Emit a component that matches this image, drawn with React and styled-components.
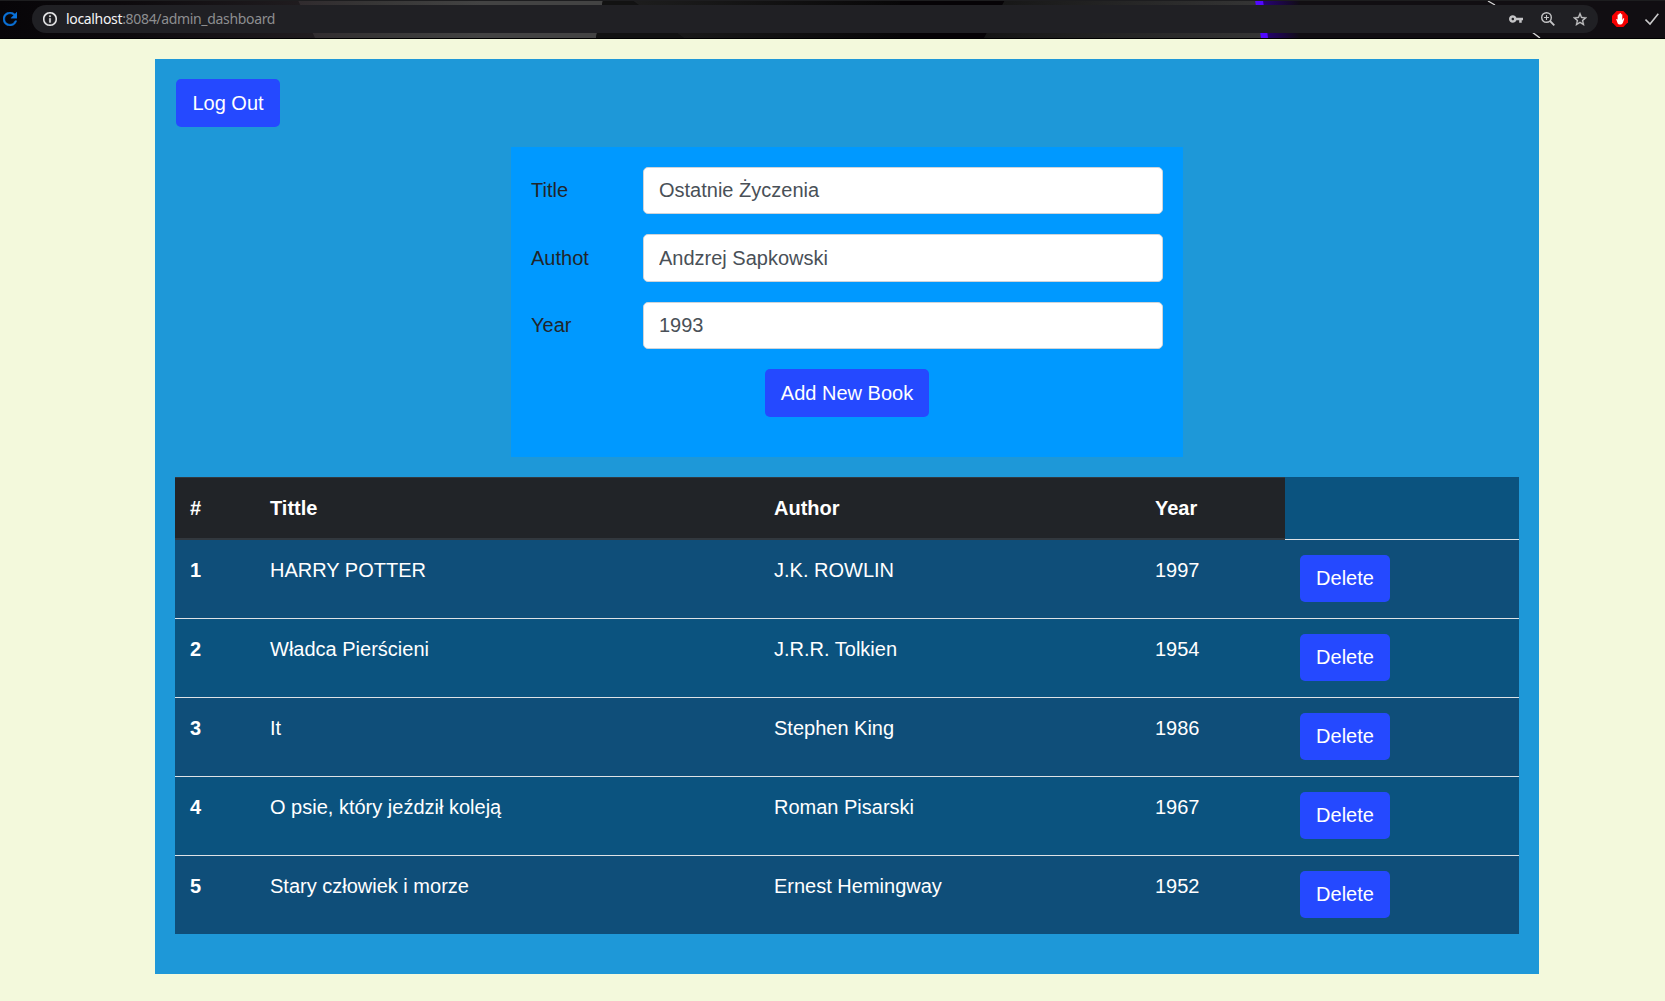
import React from "react";
import styled, { createGlobalStyle } from "styled-components";

const GlobalStyle = createGlobalStyle`
  *, *::before, *::after { box-sizing: border-box; }
  body {
    margin: 0;
    min-height: 1001px;
    background: #f3f9dc;
    color: #212529;
    font-family: "Liberation Sans", Arial, sans-serif;
    font-size: 20px;
    line-height: 30px;
    overflow: hidden;
  }
`;

const BrowserBar = styled.header`
  position: relative;
  display: flex;
  align-items: center;
  height: 39px;
  padding: 0 5px 1px 3px;
  background: #0a080b;
  border-bottom: 1px solid #000;
`;

const ThemeArt = styled.svg`
  position: absolute;
  inset: 0;
  width: 100%;
  height: 38px;
`;

const Icon = styled.svg`
  position: relative;
  flex: none;
  display: block;
  width: ${(p) => p.$size || 14}px;
  height: ${(p) => p.$size || 14}px;
  fill: ${(p) => p.$color || "#c4c4c6"};
`;

const AddressField = styled.div`
  position: relative;
  flex: 1;
  display: flex;
  align-items: center;
  height: 28px;
  margin: 0 14px 0 15px;
  padding: 0 11px;
  border-radius: 14px;
  background: #202024;
`;

const Url = styled.span`
  flex: 1;
  margin-left: 9px;
  font-family: "Noto Sans", "Open Sans", sans-serif;
  font-size: 14px;
  line-height: 20px;
  letter-spacing: -0.33px;
  color: #8d8e90;
`;

const Host = styled.span`
  color: #f4f4f5;
`;

const AddressActions = styled.div`
  display: flex;
  align-items: center;
  gap: 18px;
`;

const Extensions = styled.div`
  position: relative;
  display: flex;
  align-items: center;
  gap: 17px;
  margin-right: 1px;
`;

const Dashboard = styled.main`
  display: flex;
  flex-direction: column;
  width: 1384px;
  height: 915px;
  margin: 20px 0 0 155px;
  padding: 20px;
  background: #1e98d8;
`;

const Button = styled.button`
  display: block;
  height: ${(p) => (p.$compact ? 47 : 48)}px;
  width: ${(p) => p.$width}px;
  padding: ${(p) => (p.$compact ? "0 0 1px" : "0")};
  border: 0;
  border-radius: 5px;
  background: #2549ff;
  color: #fff;
  font: inherit;
  line-height: 30px;
  text-align: center;
`;

const TopActions = styled.div`
  padding-left: 1px;
`;

const BookForm = styled.form`
  display: flex;
  flex-direction: column;
  align-items: center;
  gap: 20px;
  width: 672px;
  height: 310px;
  margin: 20px auto;
  padding: 20px 20px 40px;
  background: #0099ff;
`;

const Field = styled.label`
  display: grid;
  grid-template-columns: 112px 520px;
  align-items: start;
  width: 100%;
`;

const FieldName = styled.span`
  padding-top: ${(p) => Math.floor((p.$height - 30) / 2)}px;
`;

const Input = styled.input`
  width: 100%;
  height: ${(p) => p.$height}px;
  padding: 0 15px;
  border: 1px solid #ced4da;
  border-radius: 5px;
  background: #fff;
  color: #495057;
  font: inherit;
  outline: none;
`;

const BookTable = styled.table`
  width: 1344px;
  table-layout: fixed;
  border-collapse: separate;
  border-spacing: 0;
  background: #0b537f;
  color: #fff;
`;

const Column = styled.col`
  width: ${(p) => p.$width}px;
`;

const HeadCell = styled.th`
  height: 63px;
  padding: 0 15px;
  text-align: left;
  background: #212428;
  border-top: 1px solid #32383e;
  border-bottom: 2px solid #32383e;
`;

const EmptyHead = styled.td`
  border-bottom: 1px solid #dee2e6;
`;

const BookRow = styled.tr`
  height: 79px;
  &:nth-child(odd) { background: #0f4e79; }
  &:last-child { height: 78px; }
  &:last-child > * { border-bottom: 0; }
`;

const Cell = styled.td`
  padding: 15px 15px 0;
  vertical-align: top;
  text-align: left;
  border-bottom: 1px solid #dee2e6;
`;

const fields = [
  { label: "Title", value: "Ostatnie Życzenia", height: 47 },
  { label: "Authot", value: "Andzrej Sapkowski", height: 48 },
  { label: "Year", value: "1993", height: 47 },
];

const books = [
  ["HARRY POTTER", "J.K. ROWLIN", "1997"],
  ["Władca Pierścieni", "J.R.R. Tolkien", "1954"],
  ["It", "Stephen King", "1986"],
  ["O psie, który jeździł koleją", "Roman Pisarski", "1967"],
  ["Stary człowiek i morze", "Ernest Hemingway", "1952"],
];

function BarArt() {
  return (
    <ThemeArt viewBox="0 0 1665 38" preserveAspectRatio="none">
      <defs>
        <linearGradient id="left"><stop offset="0" stopColor="#070508" /><stop offset=".4" stopColor="#0d0a0d" /><stop offset="1" stopColor="#211d20" /></linearGradient>
        <linearGradient id="grey"><stop offset="0" stopColor="#302b2e" /><stop offset=".25" stopColor="#373636" /><stop offset=".6" stopColor="#434343" /><stop offset="1" stopColor="#434343" /></linearGradient>
        <linearGradient id="fade"><stop offset="0" stopColor="#1d1d1d" /><stop offset="1" stopColor="#080708" /></linearGradient>
        <linearGradient id="steel"><stop offset="0" stopColor="#151515" /><stop offset="1" stopColor="#353535" /></linearGradient>
        <linearGradient id="violet"><stop offset="0" stopColor="#28007a" /><stop offset="1" stopColor="#100c13" /></linearGradient>
      </defs>
      <rect width="315" height="38" fill="url(#left)" />
      <path d="M298 0H603L596 38H315Z" fill="url(#grey)" />
      <path d="M603 0H632L684 38H596Z" fill="#121212" />
      <path d="M632 0H900V38H684Z" fill="url(#fade)" />
      <path d="M900 0H1005L984 38H900Z" fill="#060306" />
      <path d="M1005 0H1256L1262 38H984Z" fill="url(#steel)" />
      <path d="M1262 0H1300V38H1266Z" fill="url(#violet)" />
      <path d="M1255 0H1263L1268 38H1261Z" fill="#5208ff" />
      <path d="M1300 0H1665V38H1300Z" fill="#110e12" />
      <path d="M1488 1L1495 5M1532 32L1540 38" stroke="#d5d5d5" strokeWidth="1.4" />
      <rect width="1665" height="1" fill="#1d1d1f" />
    </ThemeArt>
  );
}

export default function App() {
  return (
    <>
      <GlobalStyle />
      <BrowserBar>
        <BarArt />
        <Icon viewBox="4 4 16 16" $color="#0b72d9">
          <path d="M17.65 6.35A7.958 7.958 0 0012 4c-4.42 0-7.99 3.58-7.99 8s3.57 8 7.99 8c3.73 0 6.84-2.55 7.73-6h-2.08A5.99 5.99 0 0112 18c-3.31 0-6-2.69-6-6s2.69-6 6-6c1.66 0 3.14.69 4.22 1.78L13 11h7V4l-2.35 2.35z" stroke="#0b72d9" strokeWidth=".5" />
        </Icon>
        <AddressField>
          <Icon viewBox="2 2 20 20" $color="#ededee">
            <path d="M11 17h2v-6h-2v6zm1-15C6.48 2 2 6.48 2 12s4.48 10 10 10 10-4.48 10-10S17.52 2 12 2zm0 18c-4.41 0-8-3.59-8-8s3.59-8 8-8 8 3.59 8 8-3.59 8-8 8zM11 9h2V7h-2v2z" stroke="#ededee" strokeWidth=".4" />
          </Icon>
          <Url><Host>localhost</Host>:8084/admin_dashboard</Url>
          <AddressActions>
            <Icon viewBox="1 1 22 22">
              <path d="M12.65 10C11.83 7.67 9.61 6 7 6c-3.31 0-6 2.69-6 6s2.69 6 6 6c2.61 0 4.83-1.67 5.65-4H17v4h4v-4h2v-4H12.65zM7 14c-1.1 0-2-.9-2-2s.9-2 2-2 2 .9 2 2-.9 2-2 2z" />
            </Icon>
            <Icon viewBox="0 0 14 14">
              <g fill="none" stroke="#c4c4c6">
                <circle cx="5.5" cy="5.5" r="4.8" strokeWidth="1.4" />
                <path d="M9 9L13.3 13.3" strokeWidth="1.8" />
                <path d="M3 5.5H8M5.5 3V8" strokeWidth="1.1" />
              </g>
            </Icon>
            <Icon viewBox="2 1.5 20 20">
              <path d="M22 9.24l-7.19-.62L12 2 9.19 8.63 2 9.24l5.46 4.73L5.82 21 12 17.27 18.18 21l-1.63-7.03L22 9.24zM12 15.4l-3.76 2.27 1-4.28-3.32-2.88 4.38-.38L12 6.1l1.71 4.04 4.38.38-3.32 2.88 1 4.28L12 15.4z" stroke="#c4c4c6" strokeWidth=".4" />
            </Icon>
          </AddressActions>
        </AddressField>
        <Extensions>
          <Icon viewBox="0 0 16 16" $size={16}>
            <path d="M4.7 0H11.3L16 4.7V11.3L11.3 16H4.7L0 11.3V4.7Z" fill="#f50000" />
            <path d="M4.2 8.3c.6-.5 1.2-.1 1.4.5V4.2c0-.8 1-.8 1.1 0V3.1c0-.9 1.2-.9 1.2 0v-.4c.1-.8 1.2-.8 1.2 0v1c.1-.8 1.2-.8 1.2 0v5.5l.7-1.5c.4-.8 1.5-.5 1.2.4l-1.3 3.6c-.5 1.2-1.3 1.8-2.6 1.8-1.5 0-2.3-.5-2.8-1.6z" fill="#fff" />
          </Icon>
          <Icon viewBox="0 0 14 14">
            <path d="M.5 7.5L5 12L13.3 1.7" fill="none" stroke="#c9c9ca" strokeWidth="1.6" />
          </Icon>
        </Extensions>
      </BrowserBar>
      <Dashboard>
        <TopActions>
          <Button $width={104}>Log Out</Button>
        </TopActions>
        <BookForm>
          {fields.map((f) => (
            <Field key={f.label}>
              <FieldName $height={f.height}>{f.label}</FieldName>
              <Input $height={f.height} defaultValue={f.value} />
            </Field>
          ))}
          <Button type="button" $width={164}>Add New Book</Button>
        </BookForm>
        <BookTable>
          <colgroup>
            {[80, 504, 381, 145, 234].map((w) => (
              <Column key={w} $width={w} />
            ))}
          </colgroup>
          <thead>
            <tr>
              <HeadCell>#</HeadCell>
              <HeadCell>Tittle</HeadCell>
              <HeadCell>Author</HeadCell>
              <HeadCell>Year</HeadCell>
              <EmptyHead />
            </tr>
          </thead>
          <tbody>
            {books.map(([title, author, year], i) => (
              <BookRow key={title}>
                <Cell as="th">{i + 1}</Cell>
                <Cell>{title}</Cell>
                <Cell>{author}</Cell>
                <Cell>{year}</Cell>
                <Cell>
                  <Button $compact $width={90}>Delete</Button>
                </Cell>
              </BookRow>
            ))}
          </tbody>
        </BookTable>
      </Dashboard>
    </>
  );
}
